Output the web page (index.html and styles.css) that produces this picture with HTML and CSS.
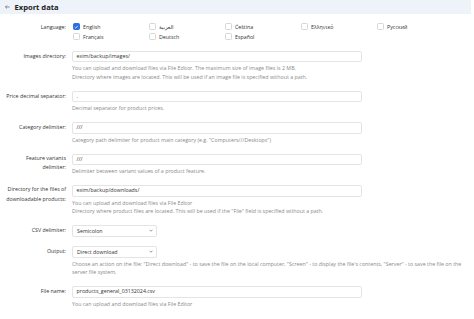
FILE: index.html
```html
<!DOCTYPE html>
<html lang="en">
<head>
<meta charset="utf-8">
<title>Export data</title>
<link rel="stylesheet" href="styles.css">
</head>
<body>
<header class="page-header">
  <svg class="back" width="5" height="4" viewBox="0 0 10 8"><path d="M9.5 4H1M4 0.8L0.8 4L4 7.2" fill="none" stroke="#444" stroke-width="1.1"/></svg>
  <h1 class="title">Export data</h1>
</header>
<main class="form">
  <div class="row row--lang">
    <div class="label label--lang">Language:</div>
    <div class="controls">
      <div class="lang-grid">
        <div class="lang"><span class="cb cb--on"><svg width="5" height="4" viewBox="0 0 10 8"><path d="M1.5 4.2L4 6.6L8.6 1.4" fill="none" stroke="#fff" stroke-width="1.6"/></svg></span>English</div>
        <div class="lang"><span class="cb"></span>العربية</div>
        <div class="lang"><span class="cb"></span>Čeština</div>
        <div class="lang"><span class="cb"></span>Ελληνικό</div>
        <div class="lang"><span class="cb"></span>Русский</div>
        <div class="lang"><span class="cb"></span>Français</div>
        <div class="lang"><span class="cb"></span>Deutsch</div>
        <div class="lang"><span class="cb"></span>Español</div>
      </div>
    </div>
  </div>

  <div class="row">
    <div class="label">Images directory:</div>
    <div class="controls">
      <div class="input">exim/backup/images/</div>
      <p class="help">You can upload and download files via File Editor. The maximum size of image files is 2 MB.<br>Directory where images are located. This will be used if an image file is specified without a path.</p>
    </div>
  </div>

  <div class="row">
    <div class="label">Price decimal separator:</div>
    <div class="controls">
      <div class="input">.</div>
      <p class="help">Decimal separator for product prices.</p>
    </div>
  </div>

  <div class="row">
    <div class="label">Category delimiter:</div>
    <div class="controls">
      <div class="input">///</div>
      <p class="help">Category path delimiter for product main category (e.g. "Computers///Desktops")</p>
    </div>
  </div>

  <div class="row">
    <div class="label label--multi">Feature variants delimiter:</div>
    <div class="controls">
      <div class="input">///</div>
      <p class="help">Delimiter between variant values of a product feature.</p>
    </div>
  </div>

  <div class="row">
    <div class="label label--multi">Directory for the files of downloadable products:</div>
    <div class="controls">
      <div class="input">exim/backup/downloads/</div>
      <p class="help">You can upload and download files via File Editor<br>Directory where product files are located. This will be used if the "File" field is specified without a path.</p>
    </div>
  </div>

  <div class="row">
    <div class="label">CSV delimiter:</div>
    <div class="controls">
      <div class="select"><span>Semicolon</span><svg width="4" height="3" viewBox="0 0 8 5"><path d="M1 1L4 4L7 1" fill="none" stroke="#555" stroke-width="1.2"/></svg></div>
    </div>
  </div>

  <div class="row">
    <div class="label">Output:</div>
    <div class="controls">
      <div class="select"><span>Direct download</span><svg width="4" height="3" viewBox="0 0 8 5"><path d="M1 1L4 4L7 1" fill="none" stroke="#555" stroke-width="1.2"/></svg></div>
      <p class="help">Choose an action on the file: "Direct download" - to save the file on the local computer, "Screen" - to display the file's contents, "Server" - to save the file on the server file system.</p>
    </div>
  </div>

  <div class="row">
    <div class="label">File name:</div>
    <div class="controls">
      <div class="input">products_general_03132024.csv</div>
      <p class="help">You can upload and download files via File Editor</p>
    </div>
  </div>
</main>
</body>
</html>
```

FILE: styles.css
```css
* { box-sizing: border-box; }

body {
  margin: 0;
  background: #fff;
  color: #3a3a3a;
  font-family: "Open Sans", "DejaVu Sans", sans-serif;
  font-size: 5.3px;
}

.page-header {
  height: 14px;
  margin-right: 3px;
  padding-left: 5px;
  background: #eef2f9;
  display: flex;
  align-items: center;
}

.back { margin-right: 4.5px; }

.title {
  margin: 0;
  font-size: 7.6px;
  font-weight: 700;
  color: #222;
}

.form { padding-top: 7.5px; }

.row {
  display: grid;
  grid-template-columns: 66px 401px;
  column-gap: 6px;
  margin-bottom: 9.5px;
}

.row--lang { margin-bottom: 9px; }

.label {
  padding-left: 4px;
  text-align: right;
  line-height: 11.5px;
  color: #333;
}

.label--lang { line-height: 10px; }

.label--multi { line-height: 9.5px; }

.lang-grid {
  display: grid;
  grid-template-columns: repeat(5, 76px);
  grid-auto-rows: 10px;
}

.lang {
  display: flex;
  align-items: center;
  padding-left: 1px;
  color: #333;
}

.cb {
  width: 6.5px;
  height: 6.5px;
  margin-right: 3.5px;
  border: 1px solid #d6d6d6;
  border-radius: 1.5px;
  background: #fff;
  display: flex;
  align-items: center;
  justify-content: center;
}

.cb--on {
  background: #2d6fdf;
  border-color: #2d6fdf;
}

.input {
  width: 290px;
  height: 11.5px;
  padding-left: 3.5px;
  border: 1px solid #e4e4e4;
  border-radius: 2px;
  background: #fff;
  line-height: 9.5px;
  color: #333;
}

.select {
  width: 85px;
  height: 11.5px;
  padding: 0 3px 0 4px;
  border: 1px solid #e4e4e4;
  border-radius: 2px;
  background: #fff;
  display: flex;
  align-items: center;
  justify-content: space-between;
  color: #333;
}

.help {
  margin: 2px 0 0;
  line-height: 8.5px;
  color: #8a8a8a;
}
```
